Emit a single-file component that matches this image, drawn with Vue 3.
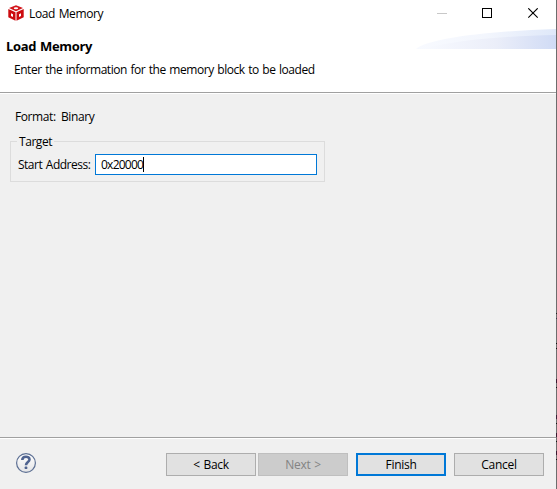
<script setup>
import { ref } from 'vue'
const address = ref('0x20000')
</script>

<template>
  <div class="window">
    <div class="main">
      <header class="banner">
        <div class="titlebar">
          <svg class="app-icon" width="16" height="16" viewBox="0 0 16 16">
            <path d="M8 .2 15 3 8 6.3 1 3Z" fill="#d3161b" />
            <path d="M.3 4 7.5 7.3V15.7L.3 12.2ZM15.7 4 8.5 7.3V15.7L15.7 12.2Z" fill="#cc0c10" />
            <ellipse cx="8" cy="3.2" rx="2.2" ry="1" fill="#fff" />
            <path d="M3 8.2 5 9.2V12L3 11ZM13 8.2 11 9.2V12L13 11Z" fill="#fff" />
          </svg>
          <span class="caption">Load Memory</span>
          <div class="controls">
            <svg width="102" height="11" viewBox="0 0 102 11" fill="none">
              <path d="M0 5.5H10" stroke="#c8c8c8" />
              <rect x="45.5" y=".5" width="9" height="9" stroke="#000" />
              <path d="M91.3.3 100.7 9.7M100.7.3 91.3 9.7" stroke="#000" stroke-width="1.1" />
            </svg>
          </div>
        </div>
        <svg class="swoosh" width="140" height="20" viewBox="0 0 140 20">
          <defs>
            <linearGradient id="outer"><stop offset="0" stop-color="#f8faff" /><stop offset=".5" stop-color="#f3f6fd" /><stop offset="1" stop-color="#dfe8f9" /></linearGradient>
            <linearGradient id="inner"><stop offset="0" stop-color="#f8faff" /><stop offset=".55" stop-color="#ebeef9" /><stop offset="1" stop-color="#d0dbf5" /></linearGradient>
          </defs>
          <path d="M0 20C10 10 70 2 140 0V20Z" fill="url(#outer)" />
          <path d="M6 20C35 12 85 7 140 6V20Z" fill="url(#inner)" />
        </svg>
        <h1>Load Memory</h1>
        <p>Enter the information for the memory block to be loaded</p>
      </header>
      <section class="content">
        <div class="format"><span class="format-label">Format:</span><span class="format-value">Binary</span></div>
        <fieldset>
          <legend>Target</legend>
          <div class="field">
            <label>Start Address:</label>
            <div class="input"><span>{{ address }}</span><i></i></div>
          </div>
        </fieldset>
      </section>
      <footer>
        <svg class="help" width="22" height="22" viewBox="0 0 22 22">
          <defs><linearGradient id="help" x2="0" y2="1"><stop stop-color="#fff" /><stop offset="1" stop-color="#e4e4e6" /></linearGradient></defs>
          <circle cx="11" cy="11" r="9.4" fill="url(#help)" stroke="#5c6f93" stroke-width="1.2" />
          <path d="M7.3 8C7.3 3.9 14.5 3.7 14.5 7.5 14.5 10 11 10.1 11 13.2" fill="none" stroke="#506490" stroke-width="2.6" />
          <rect x="9.7" y="14.6" width="2.6" height="2.5" rx=".6" fill="#506490" />
        </svg>
        <button class="back">&lt; Back</button>
        <button class="next" disabled>Next &gt;</button>
        <button class="finish">Finish</button>
        <button class="cancel">Cancel</button>
      </footer>
    </div>
    <div class="edge"></div>
  </div>
</template>

<style>
body { margin: 0; overflow: hidden; }
</style>
<style scoped>
* { box-sizing: border-box; }
.window { width: 557px; height: 489px; display: flex; background: #f0f0f0; color: #000; font: 12px/16px "Open Sans", "Noto Sans", sans-serif; white-space: nowrap; }
.main { width: 556px; display: flex; flex-direction: column; }
.edge { width: 1px; background: linear-gradient(transparent 313px, #222 313px 314px, transparent 314px 318px, #35384a 318px 319px, transparent 319px 343px, #111 343px 344px, transparent 344px 348px, #111 348px 349px, transparent 349px 379px, #3a1830 379px 383px, transparent 383px 387px, #111 387px 388px, transparent 388px 415px, #3a2038 415px 419px, transparent 419px 423px, #111 423px 424px, transparent 424px 433px, #3a1830 433px 437px, transparent 437px 441px, #111 441px 442px, transparent 442px 451px, #3a1830 451px 455px, transparent 455px 459px, #111 459px 460px, transparent 460px) #6d6d6d; }
.banner { position: relative; height: 94px; background: #fff; border-bottom: 1px solid #fff; box-shadow: inset 0 -1px #a0a0a0; }
.titlebar { height: 27px; display: flex; padding: 5px 17px 0 8px; }
.caption { margin-left: 5px; padding-top: 1px; letter-spacing: -.38px; word-spacing: 1px; }
.controls { margin-left: auto; padding-top: 3px; height: 14px; }
.controls svg, .app-icon, .help { display: block; }
.swoosh { position: absolute; right: 0; top: 29px; }
h1 { margin: 0; padding: 11px 0 0 6px; font-size: 13px; line-height: 16px; font-weight: 700; letter-spacing: -.35px; word-spacing: 1px; }
p { margin: 0; padding: 8px 0 0 14px; letter-spacing: -.46px; word-spacing: .9px; }
.content { flex: 1; padding: 15px 0 0 10px; }
.format { display: flex; padding-left: 5px; height: 16px; letter-spacing: -.4px; }
.format-label { width: 46px; }
fieldset { margin: 8px 0 0; padding: 0; border: 1px solid #dcdcdc; width: 315px; height: 49px; min-width: 0; }
legend { padding: 0 2px; margin-left: 6px; height: 17px; line-height: 18px; letter-spacing: -.45px; }
.field { display: flex; padding-left: 7px; margin-top: 4px; }
label { width: 77px; padding-top: 3px; letter-spacing: -.5px; word-spacing: 1px; }
.input { width: 222px; height: 21px; background: #fff; border: 1px solid #0078d7; display: flex; padding: 2px 0 0 5px; letter-spacing: -.75px; }
.input i { width: 1px; height: 15px; background: #000; }
footer { height: 52px; border-top: 1px solid #a0a0a0; box-shadow: inset 0 1px #fff; display: flex; padding: 15px 0 0 15px; }
.help { margin-top: -1px; }
button { width: 90px; height: 23px; padding: 0; border: 1px solid #adadad; background: #e1e1e1; font: inherit; color: #000; letter-spacing: -.3px; }
.back { margin-left: 129px; word-spacing: 1px; }
.next { margin-left: 2px; background: #ccc; border-color: #bfbfbf; color: #838383; word-spacing: 1px; }
.finish { margin-left: 8px; border: 2px solid #0078d7; }
.cancel { margin-left: 8px; }
</style>
